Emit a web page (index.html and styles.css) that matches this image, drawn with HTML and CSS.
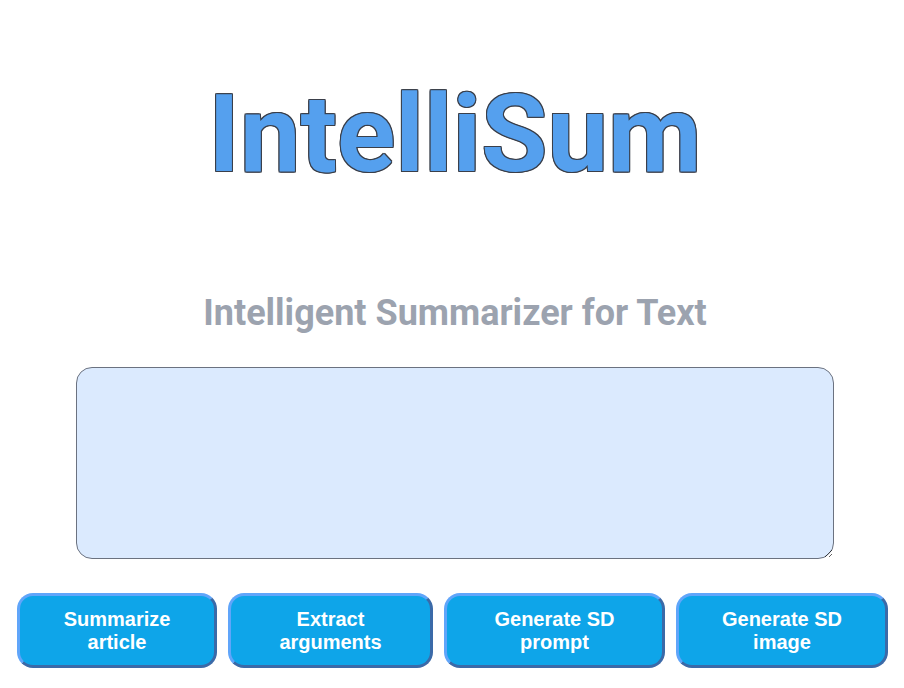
FILE: index.html
```html
<!DOCTYPE html>
<html>
<head>
<meta charset="utf-8">
<link rel="stylesheet" href="styles.css">
</head>
<body>
<div class="page">
  <h1 class="logo">IntelliSum</h1>
  <h2 class="subtitle">Intelligent Summarizer for Text</h2>
  <div class="input-wrap">
    <textarea class="input"></textarea>
  </div>
  <div class="actions">
    <button class="btn w1">Summarize<br>article</button>
    <button class="btn w2">Extract<br>arguments</button>
    <button class="btn w3">Generate SD<br>prompt</button>
    <button class="btn w4">Generate SD<br>image</button>
  </div>
</div>
</body>
</html>
```

FILE: styles.css
```css
html, body {
  margin: 0;
  padding: 0;
  background: #ffffff;
}
.page {
  width: 904px;
  display: flex;
  flex-direction: column;
}
.logo {
  margin: 71px 0 0 0;
  padding-left: 6px;
  text-align: center;
  font-family: Roboto, "Liberation Sans", sans-serif;
  font-weight: 700;
  font-size: 108px;
  line-height: 127px;
  color: #55a0ee;
  text-shadow:
    1px 0 0 #3a3f4a, -1px 0 0 #3a3f4a, 0 1px 0 #3a3f4a, 0 -1px 0 #3a3f4a,
    1px 1px 0 #3a3f4a, -1px -1px 0 #3a3f4a, 1px -1px 0 #3a3f4a, -1px 1px 0 #3a3f4a;
}
.subtitle {
  margin: 95px 0 0 0;
  padding-left: 6px;
  text-align: center;
  font-family: Roboto, "Liberation Sans", sans-serif;
  font-weight: 700;
  font-size: 36px;
  line-height: 40px;
  color: #9ca3af;
}
.input-wrap {
  margin-top: 34px;
  padding-left: 76px;
  display: flex;
}
.input {
  box-sizing: border-box;
  width: 758px;
  height: 192px;
  margin: 0;
  background: #dbeafe;
  border: 1px solid #6b7280;
  border-radius: 16px;
  padding: 8px;
  resize: both;
  outline: none;
}
.actions {
  display: flex;
  gap: 11px;
  margin-top: 34px;
  padding-left: 17px;
}
.btn {
  box-sizing: border-box;
  height: 75px;
  background: #0ea5e9;
  border: 3px solid;
  border-color: #60a5fa #3b6aa8 #3b6aa8 #60a5fa;
  border-radius: 16px;
  color: #ffffff;
  font-family: "Liberation Sans", Arial, sans-serif;
  font-weight: 700;
  font-size: 20px;
  line-height: 23px;
  padding: 0;
  text-align: center;
}
.w1 { width: 200px; }
.w2 { width: 205px; }
.w3 { width: 221px; }
.w4 { width: 212px; }
```
